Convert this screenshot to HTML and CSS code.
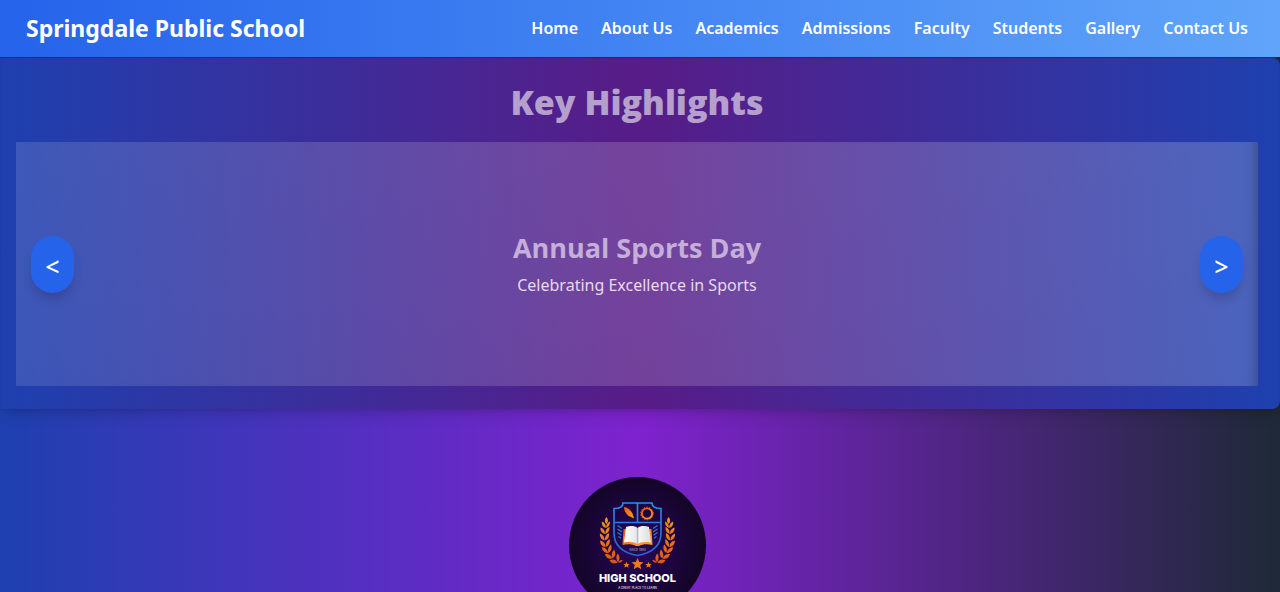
FILE: index.html
```html
<!DOCTYPE html>
<html lang="en">
<head>
<meta charset="utf-8">
<meta name="viewport" content="width=device-width, initial-scale=1">
<title>Springdale Public School</title>
<link rel="stylesheet" href="styles.css">
</head>
<body>
<header class="navbar">
  <div class="brand">Springdale Public School</div>
  <nav class="menu" aria-label="Main">
    <a href="#home">Home</a>
    <a href="#about">About Us</a>
    <a href="#academics">Academics</a>
    <a href="#admissions">Admissions</a>
    <a href="#faculty">Faculty</a>
    <a href="#students">Students</a>
    <a href="#gallery">Gallery</a>
    <a href="#contact">Contact Us</a>
  </nav>
</header>
<main>
  <section class="highlights">
    <h1 class="heading">Key Highlights</h1>
    <div class="slide">
      <button class="arrow" type="button" aria-label="Previous">&lt;</button>
      <div class="caption">
        <h2 class="caption-title">Annual Sports Day</h2>
        <p class="caption-text">Celebrating Excellence in Sports</p>
      </div>
      <button class="arrow" type="button" aria-label="Next">&gt;</button>
    </div>
  </section>
  <section class="intro">
    <svg class="crest" viewBox="0 0 137 137" role="img" aria-label="High School crest">
      <defs>
        <radialGradient id="disc"><stop offset="0" stop-color="#2a0758"/><stop offset=".55" stop-color="#1d0540"/><stop offset="1" stop-color="#130526"/></radialGradient>
        <linearGradient id="gold" gradientUnits="userSpaceOnUse" x1="0" y1="38" x2="0" y2="88"><stop offset="0" stop-color="#f09a1c"/><stop offset="1" stop-color="#dc4f1b"/></linearGradient>
        <linearGradient id="ember" x1="0" y1="0" x2="1" y2="1"><stop offset="0" stop-color="#e8501a"/><stop offset="1" stop-color="#fbac20"/></linearGradient>
        <linearGradient id="edge" x1="0" y1="0" x2="0" y2="1"><stop offset="0" stop-color="#2b8df0"/><stop offset="1" stop-color="#2465d8"/></linearGradient>
        <linearGradient id="page" x1="0" y1="0" x2="1" y2="0"><stop offset="0" stop-color="#fff"/><stop offset=".45" stop-color="#e8e8ec"/><stop offset=".5" stop-color="#b9b9c2"/><stop offset=".56" stop-color="#f6f6f8"/><stop offset="1" stop-color="#dcdce2"/></linearGradient>
        <g id="branch" fill="url(#gold)">
          <path d="M36 39C33.500 42 34 44 36 46C38 44 38.500 42 36 39Z"/>
          <path d="M35.500 50C31.500 49 30.500 46 31 43.500C34 44.500 35.500 47 35.500 50ZM35.700 50C35.500 47 37 44.500 40 43.500C40 47 38.500 49 35.700 50Z"/>
          <path d="M34.500 56C30.500 55 29 52 29.500 49.500C33 50.500 34.500 53 34.500 56ZM34.700 56C34.500 53 36 50 39.500 49C39.500 53 38 55 34.700 56Z"/>
          <path d="M34 62.500C30 61.500 28.500 58.500 28.800 55.500C32 56.500 34 59 34 62.500ZM34.200 62.500C34 59 36 56 39 55C39.500 59 38 61.500 34.200 62.500Z"/>
          <path d="M35 69C30.500 68.500 29 65.500 29 62.500C33 63 35 65.500 35 69ZM35.300 69C35 65.500 36.500 62.500 39.500 61C40.500 65 39 67.500 35.300 69Z"/>
          <path d="M38 75C33.500 75 31.500 72.500 31 69C35 69.500 37.500 71.500 38 75ZM38.300 75C37 71.500 38.500 68.500 41 66.500C42.500 70 42 73 38.300 75Z"/>
          <path d="M42.500 80.500C38 81.500 35.500 79.500 34.300 76C38.500 75.500 41.500 77 42.500 80.500ZM42.800 80.500C41 77 42 74 44.500 71.500C46.500 75 46.500 78 42.800 80.500Z"/>
          <path d="M48.500 84.500C44.500 86.500 41.500 85.500 39.500 82.200C43.500 80.700 46.500 81.500 48.500 84.500ZM48.800 84.300C46.500 81 46.500 78 48.500 75.500C51 78 51.500 81.500 48.800 84.300ZM49 84.500C51 82.300 53 81.500 54 82.500C53 84 51.500 85 49 84.500Z"/>
        </g>
        <path id="star" d="M0-6L1.700-2L6-1.800L2.700 1L3.800 5.200L0 2.900L-3.800 5.200L-2.700 1L-6-1.800L-1.700-2Z"/>
      </defs>
      <circle cx="68.500" cy="68.500" r="68.500" fill="url(#disc)"/>
      <use href="#branch" transform="translate(5 1) scale(.9 1)"/>
      <use href="#branch" transform="translate(132 1) scale(-.9 1)"/>
      <path d="M54 26H83C83 29.500 86 31.500 92 31.500V56C92 69 82 76 68.500 78.500C55 76 45 69 45 56V31.500C51 31.500 54 29.500 54 26ZM68.500 26V45.500M45 45.500H92" fill="none" stroke="url(#edge)" stroke-width="1.600"/>
      <path d="M55 30C59 30.500 63 34 64 38L65 41.500L61 39.500C57.500 38 55 34 55 30Z" fill="url(#ember)"/>
      <circle cx="78" cy="36.500" r="5.200" fill="none" stroke="url(#ember)" stroke-width="1.800"/>
      <circle cx="78" cy="36.500" r="6.300" fill="none" stroke="#e8671b" stroke-width="1" stroke-dasharray="1.400 1.430"/>
      <path d="M48.500 48.500L53 51.500M48.500 52L53 55M48.500 55.500L52.500 58.200M49.500 59.500L52 61.200M88.500 48.500L84 51.500M88.500 52L84 55M88.500 55.500L84.500 58.200M87.500 59.500L85 61.200" stroke="#267fe2" stroke-width="1.200"/>
      <path d="M54.500 52L53.500 68C58 66.500 64 67 67 69H70C73 67 79 66.500 83.500 68L82.500 52Z" fill="url(#ember)"/>
      <path d="M57 50C61 48.500 66 48.700 68.500 51C71 48.700 76 48.500 80 50L82 65.500C77 64.500 71 65 68.500 67.500C66 65 60 64.500 55 65.500Z" fill="url(#page)"/>
      <text class="crest-year" x="68.500" y="74">SINCE 1990</text>
      <g fill="#ed7a1d">
        <use href="#star" transform="translate(68.500 87)"/>
        <use href="#star" transform="translate(57.500 88) scale(.55)"/>
        <use href="#star" transform="translate(79.500 88) scale(.55)"/>
      </g>
      <text class="crest-name" x="68.500" y="105">HIGH SCHOOL</text>
      <text class="crest-motto" x="68.500" y="112">A GREAT PLACE TO LEARN</text>
    </svg>
  </section>
</main>
</body>
</html>
```
FILE: styles.css
```css
* {
  box-sizing: border-box;
}

body {
  margin: 0;
  min-height: 100vh;
  font-family: "Segoe UI", "Noto Sans", "Open Sans", sans-serif;
  color: #fff;
  background: linear-gradient(to right, #1e40af, #7e22ce 50%, #1f2937);
}

.navbar {
  display: flex;
  align-items: center;
  justify-content: space-between;
  height: 57px;
  padding: 0 32px 2px 26px;
  background: linear-gradient(to right, #2563eb, #60a5fa);
}

.brand {
  font-size: 23px;
  font-weight: 700;
}

.menu {
  display: flex;
  gap: 23px;
}

.menu a {
  color: inherit;
  font-size: 16px;
  font-weight: 600;
  text-decoration: none;
}

.highlights {
  padding: 23px 22px 23px 16px;
  border-radius: 0 8px 8px 0;
  background: linear-gradient(to right, #1e40af, #581c87 50%, #1e40af);
  box-shadow: inset 0 1px 1px #1f293799, 0 8px 15px -3px #0000001f, 0 3px 6px -2px #0000001f;
}

.heading {
  margin: 0 0 17px;
  font-family: "Segoe UI", "Open Sans", sans-serif;
  font-size: 34px;
  font-weight: 800;
  line-height: 45px;
  text-align: center;
  color: #b49fcd;
}

.slide {
  display: flex;
  align-items: center;
  justify-content: space-between;
  min-height: 244px;
  padding: 0 15px;
  background: linear-gradient(45deg, #ffffff1f, #ffffff2b 50%, #ffffff33);
  box-shadow: inset -12px 0 12px -10px #1f293766;
}

.arrow {
  width: 43px;
  height: 57px;
  padding: 4px 0 0;
  border: 0;
  border-radius: 22px;
  background: #2563eb;
  box-shadow: 0 8px 12px -3px #0003;
  color: #fff;
  font-family: inherit;
  font-size: 25px;
  font-weight: 500;
}

.caption {
  text-align: center;
}

.caption-title {
  margin: 0;
  font-family: "Segoe UI", "Open Sans", sans-serif;
  font-size: 27px;
  font-weight: 700;
  line-height: 38px;
  color: #c5aed9;
}

.caption-text {
  margin: 4px 0 0;
  font-size: 16px;
  line-height: 28px;
  color: #e5daee;
}

.intro {
  display: flex;
  justify-content: center;
  padding: 68px 5px 68px 0;
}

.crest {
  width: 137px;
  height: 137px;
}

.crest text {
  fill: #fff;
  text-anchor: middle;
}

.crest-name {
  font: 800 11px Inter, sans-serif;
}

.crest-motto {
  font: 400 3px Inter, sans-serif;
}

.crest-year {
  font: 400 3px Inter, sans-serif;
  opacity: .6;
}
```
